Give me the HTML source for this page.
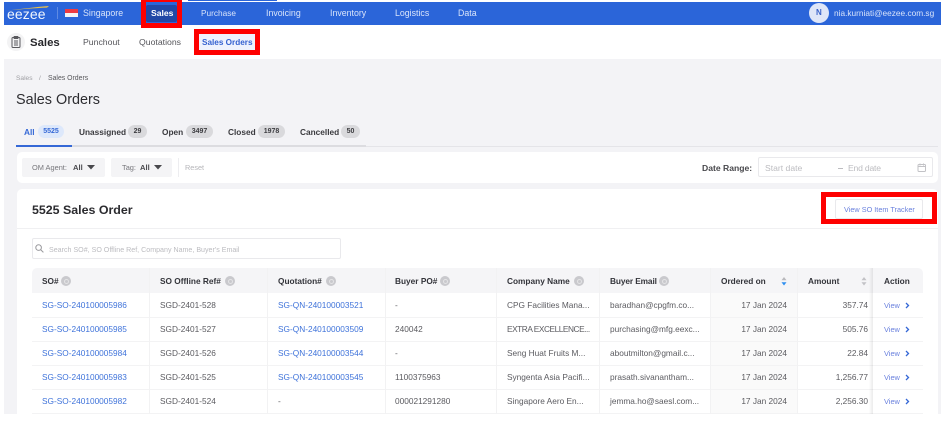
<!DOCTYPE html>
<html lang="en">
<head>
<meta charset="utf-8">
<title>Sales Orders</title>
<style>
html,body{margin:0;padding:0;background:#fff}
body{position:relative;width:941px;height:427px;overflow:hidden;font-family:"Liberation Sans",Arial,sans-serif;color:#3a3a3e}
#p{position:absolute;left:0;top:0;width:941px;height:427px;filter:blur(.3px)}
.b{position:absolute;box-sizing:border-box}
.t{position:absolute;line-height:12px;height:12px;white-space:nowrap;font-size:8.3px}
.h{font-weight:bold;color:#33343a}
.l{color:#3f73da}
.g{color:#5b5b60}
.nav{color:#d9e4fa;font-size:8.8px}
.sub{color:#55555a;font-size:8.7px}
.tab{font-size:8.3px;font-weight:bold;color:#3a3a3e}
.bd{position:absolute;top:125px;height:13px;border-radius:7px;background:#d9d9dc;color:#3c3c40;font-size:7px;font-weight:bold;line-height:13px;text-align:center}
.ic{position:absolute;top:276px;width:10px;height:10px;border-radius:50%;background:#c9c9cd}
.ic:after{content:"";position:absolute;left:3px;top:3px;width:3px;height:3px;border:1px solid #e4e4e6;border-radius:50%}
.rl{position:absolute;left:32px;width:891px;height:1px;background:#f3f3f4}
.cl{position:absolute;top:268px;width:1px;height:146px;background:#f2f2f3}
.r{position:absolute;box-sizing:border-box;border:5px solid #fe0000}
</style>
</head>
<body>
<div id="p">
  <!-- page backgrounds -->
  <div class="b" style="left:4px;top:59px;width:937px;height:355px;background:#f3f3f6"></div>
  <div class="b" style="left:188px;top:0;width:89px;height:1px;background:#2b65d9"></div>

  <!-- top nav -->
  <div class="b" style="left:4px;top:2px;width:937px;height:23px;background:#2b65d9"></div>
  <svg class="b" style="left:7px;top:5px" width="44" height="6" viewBox="0 0 44 6"><path d="M1 5.5C14 4 28 2 42 1L40 2.6C28 3 14 4.2 1 5.5Z" fill="#e9c24b"/></svg>
  <div class="t" style="left:7px;top:8px;color:#f2f6fd;font-size:14px;letter-spacing:.1px;line-height:12px">eezee</div>
  <div class="b" style="left:57px;top:7px;width:1px;height:12px;background:#5f8ae3"></div>
  <div class="b" style="left:65px;top:9px;width:13px;height:4px;background:#ee3a43"></div>
  <div class="b" style="left:65px;top:13px;width:13px;height:4px;background:#f4f4f6"></div>
  <div class="t nav" style="left:83px;top:7px">Singapore</div>
  <div class="b" style="left:146px;top:5px;width:31px;height:17px;background:#2148a6;border-radius:2px"></div>
  <div class="t" style="left:151px;top:7px;color:#fff;font-weight:bold;font-size:8.6px">Sales</div>
  <div class="t nav" style="left:201px;top:7px;font-size:8.3px">Purchase</div>
  <div class="t nav" style="left:266px;top:7px">Invoicing</div>
  <div class="t nav" style="left:330px;top:7px">Inventory</div>
  <div class="t nav" style="left:395px;top:7px">Logistics</div>
  <div class="t nav" style="left:458px;top:7px">Data</div>
  <div class="b" style="left:809px;top:3px;width:20px;height:20px;border-radius:50%;background:#dfe6f8"></div>
  <div class="t" style="left:816px;top:7px;color:#3a62c9;font-weight:bold;font-size:8px">N</div>
  <div class="t nav" style="left:834px;top:7px;font-size:8.3px">nia.kurniati@eezee.com.sg</div>

  <!-- sub nav -->
  <div class="b" style="left:7px;top:33px;width:18px;height:18px;border-radius:50%;background:#f3f3f4"></div>
  <svg class="b" style="left:11px;top:36px" width="10" height="12" viewBox="0 0 10 12" fill="none" stroke="#5a5a5e" stroke-width="1"><rect x="1" y="1.5" width="8" height="10" rx="1"/><rect x="3.2" y=".5" width="3.6" height="2" fill="#5a5a5e"/><path d="M3 5h4M3 7h4M3 9h4"/></svg>
  <div class="t" style="left:30px;top:37px;font-size:11.4px;font-weight:bold;color:#26262a">Sales</div>
  <div class="t sub" style="left:83px;top:36px">Punchout</div>
  <div class="t sub" style="left:139px;top:36px">Quotations</div>
  <div class="b" style="left:199px;top:33px;width:56px;height:17px;background:#eef2fd"></div>
  <div class="t" style="left:202px;top:37px;font-size:8.2px;font-weight:bold;color:#3461d0">Sales Orders</div>

  <!-- heading -->
  <div class="t" style="left:16px;top:73px;font-size:6.6px;color:#a0a0a5">Sales</div>
  <div class="t" style="left:39px;top:73px;font-size:6.6px;color:#a0a0a5">/</div>
  <div class="t" style="left:48px;top:73px;font-size:6.9px;color:#58585c">Sales Orders</div>
  <div class="t" style="left:16px;top:93px;font-size:14.4px;line-height:14px;height:14px;color:#2d2d31">Sales Orders</div>

  <!-- tabs -->
  <div class="t tab" style="left:24px;top:126px;color:#3568d6">All</div>
  <div class="bd" style="left:38px;width:26px;background:#dde8fb;color:#3568d6">5525</div>
  <div class="t tab" style="left:79px;top:126px">Unassigned</div>
  <div class="bd" style="left:128px;width:19px">29</div>
  <div class="t tab" style="left:162px;top:126px">Open</div>
  <div class="bd" style="left:186px;width:27px">3497</div>
  <div class="t tab" style="left:228px;top:126px">Closed</div>
  <div class="bd" style="left:258px;width:27px">1978</div>
  <div class="t tab" style="left:300px;top:126px">Cancelled</div>
  <div class="bd" style="left:341px;width:19px">50</div>
  <div class="b" style="left:366px;top:146px;width:572px;height:1px;background:#e4e4e8"></div>
  <div class="b" style="left:16px;top:145px;width:350px;height:2px;background:#dcdce0"></div>
  <div class="b" style="left:16px;top:145px;width:56px;height:2px;background:#3568d6"></div>

  <!-- filter bar -->
  <div class="b" style="left:17px;top:152px;width:921px;height:31px;background:#fff;border-radius:5px"></div>
  <div class="b" style="left:22px;top:158px;width:83px;height:19px;background:#f4f4f6;border-radius:2px"></div>
  <div class="t" style="left:32px;top:162px;font-size:7.4px;color:#77777c">OM Agent:</div>
  <div class="t" style="left:73px;top:162px;font-size:7.6px;font-weight:bold;color:#48484c">All</div>
  <svg class="b" style="left:87px;top:165px" width="8" height="5"><path d="M0 0H8L4 4.5Z" fill="#48484c"/></svg>
  <div class="b" style="left:111px;top:158px;width:61px;height:19px;background:#f4f4f6;border-radius:2px"></div>
  <div class="t" style="left:122px;top:162px;font-size:7.4px;color:#77777c">Tag:</div>
  <div class="t" style="left:140px;top:162px;font-size:7.6px;font-weight:bold;color:#48484c">All</div>
  <svg class="b" style="left:154px;top:165px" width="8" height="5"><path d="M0 0H8L4 4.5Z" fill="#48484c"/></svg>
  <div class="b" style="left:178px;top:158px;width:1px;height:19px;background:#ededf0"></div>
  <div class="t" style="left:185px;top:162px;font-size:7.3px;color:#b5b5b9">Reset</div>
  <div class="t" style="left:702px;top:162px;font-size:8.6px;font-weight:bold;color:#48484c">Date Range:</div>
  <div class="b" style="left:758px;top:157px;width:175px;height:20px;border:1px solid #e9e9ec;border-radius:2px;background:#fff"></div>
  <div class="t" style="left:765px;top:162px;font-size:8.6px;color:#bcbcc0">Start date</div>
  <div class="b" style="left:838px;top:168px;width:5px;height:1px;background:#bcbcc0"></div>
  <div class="t" style="left:848px;top:162px;font-size:8.6px;letter-spacing:-.2px;color:#bcbcc0">End date</div>
  <svg class="b" style="left:917px;top:163px" width="10" height="9" fill="none" stroke="#c2c2c6" stroke-width="1"><rect x="1" y="1.5" width="7.5" height="7" rx="1"/><path d="M1 3.5h7.5M3 .5v2M6.5 .5v2"/></svg>

  <!-- main card -->
  <div class="b" style="left:17px;top:189px;width:921px;height:225px;background:#fff;border-radius:5px 5px 0 0"></div>
  <div class="t" style="left:32px;top:204px;font-size:12.4px;font-weight:bold;color:#2b2b2f">5525 Sales Order</div>
  <div class="b" style="left:17px;top:228px;width:921px;height:1px;background:#f0f0f2"></div>
  <div class="b" style="left:835px;top:199px;width:88px;height:20px;border:1px solid #e9e9ec;border-radius:2px;background:#fff"></div>
  <div class="t" style="left:844px;top:204px;font-size:7.3px;color:#6b82de">View SO Item Tracker</div>

  <!-- search -->
  <div class="b" style="left:32px;top:238px;width:309px;height:21px;border:1px solid #e9e9ec;border-radius:2px;background:#fff"></div>
  <svg class="b" style="left:35px;top:244px" width="9" height="9" fill="none" stroke="#9a9a9e" stroke-width="1"><circle cx="3.6" cy="3.6" r="2.8"/><path d="M5.6 5.6L8.4 8.4"/></svg>
  <div class="t" style="left:49px;top:244px;font-size:7.1px;color:#bcbcc0">Search SO#, SO Offline Ref, Company Name, Buyer's Email</div>

  <!-- table -->
  <div class="b" style="left:32px;top:268px;width:891px;height:25px;background:#f5f5f7;border-radius:5px 5px 0 0"></div>
  <div class="b" style="left:711px;top:293px;width:86px;height:121px;background:#fafafa"></div>
  <div class="rl" style="top:317px"></div><div class="rl" style="top:341px"></div><div class="rl" style="top:365px"></div><div class="rl" style="top:389px"></div><div class="rl" style="top:413px"></div>
  <div class="cl" style="left:149px"></div><div class="cl" style="left:267px"></div><div class="cl" style="left:385px"></div><div class="cl" style="left:496px"></div><div class="cl" style="left:599px"></div><div class="cl" style="left:710px"></div><div class="cl" style="left:797px"></div>
  <div class="b" style="left:869px;top:268px;width:4px;height:146px;background:linear-gradient(90deg,rgba(0,0,0,0),rgba(0,0,0,.08))"></div>

  <div class="t h" style="left:42px;top:275px">SO#</div><div class="ic" style="left:61px"></div>
  <div class="t h" style="left:160px;top:275px">SO Offline Ref#</div><div class="ic" style="left:225px"></div>
  <div class="t h" style="left:278px;top:275px">Quotation#</div><div class="ic" style="left:326px"></div>
  <div class="t h" style="left:395px;top:275px">Buyer PO#</div><div class="ic" style="left:440px"></div>
  <div class="t h" style="left:507px;top:275px">Company Name</div><div class="ic" style="left:574px"></div>
  <div class="t h" style="left:610px;top:275px;letter-spacing:-.1px">Buyer Email</div><div class="ic" style="left:659px"></div>
  <div class="t h" style="left:721px;top:275px">Ordered on</div>
  <svg class="b" style="left:781px;top:277px" width="6" height="9"><path d="M3 0L5.5 3.2H.5Z" fill="#b9b9bd"/><path d="M3 8.5L5.5 5.3H.5Z" fill="#2f8ff0"/></svg>
  <div class="t h" style="left:808px;top:275px">Amount</div>
  <svg class="b" style="left:861px;top:277px" width="6" height="9"><path d="M3 0L5.5 3.2H.5Z" fill="#c2c2c6"/><path d="M3 8.5L5.5 5.3H.5Z" fill="#c2c2c6"/></svg>
  <div class="t h" style="left:884px;top:275px">Action</div>

  <!-- row 1 -->
  <div class="t l" style="left:42px;top:299px">SG-SO-240100005986</div>
  <div class="t g" style="left:160px;top:299px">SGD-2401-528</div>
  <div class="t l" style="left:278px;top:299px">SG-QN-240100003521</div>
  <div class="t g" style="left:395px;top:299px">-</div>
  <div class="t g" style="left:507px;top:299px">CPG Facilities Mana...</div>
  <div class="t g" style="left:610px;top:299px">baradhan@cpgfm.co...</div>
  <div class="t g" style="right:154px;top:299px">17 Jan 2024</div>
  <div class="t g" style="right:73px;top:299px">357.74</div>
  <div class="t" style="left:884px;top:300px;font-size:7.4px;color:#6b82de">View</div>
  <svg class="b" style="left:905px;top:302px" width="5" height="7" fill="none" stroke="#3568d6" stroke-width="1.3"><path d="M1 1l2.5 2.5L1 6"/></svg>

  <!-- row 2 -->
  <div class="t l" style="left:42px;top:323px">SG-SO-240100005985</div>
  <div class="t g" style="left:160px;top:323px">SGD-2401-527</div>
  <div class="t l" style="left:278px;top:323px">SG-QN-240100003509</div>
  <div class="t g" style="left:395px;top:323px">240042</div>
  <div class="t g" style="left:507px;top:323px;letter-spacing:-.45px">EXTRA EXCELLENCE...</div>
  <div class="t g" style="left:610px;top:323px">purchasing@mfg.eexc...</div>
  <div class="t g" style="right:154px;top:323px">17 Jan 2024</div>
  <div class="t g" style="right:73px;top:323px">505.76</div>
  <div class="t" style="left:884px;top:324px;font-size:7.4px;color:#6b82de">View</div>
  <svg class="b" style="left:905px;top:326px" width="5" height="7" fill="none" stroke="#3568d6" stroke-width="1.3"><path d="M1 1l2.5 2.5L1 6"/></svg>

  <!-- row 3 -->
  <div class="t l" style="left:42px;top:347px">SG-SO-240100005984</div>
  <div class="t g" style="left:160px;top:347px">SGD-2401-526</div>
  <div class="t l" style="left:278px;top:347px">SG-QN-240100003544</div>
  <div class="t g" style="left:395px;top:347px">-</div>
  <div class="t g" style="left:507px;top:347px">Seng Huat Fruits M...</div>
  <div class="t g" style="left:610px;top:347px">aboutmilton@gmail.c...</div>
  <div class="t g" style="right:154px;top:347px">17 Jan 2024</div>
  <div class="t g" style="right:73px;top:347px">22.84</div>
  <div class="t" style="left:884px;top:348px;font-size:7.4px;color:#6b82de">View</div>
  <svg class="b" style="left:905px;top:350px" width="5" height="7" fill="none" stroke="#3568d6" stroke-width="1.3"><path d="M1 1l2.5 2.5L1 6"/></svg>

  <!-- row 4 -->
  <div class="t l" style="left:42px;top:371px">SG-SO-240100005983</div>
  <div class="t g" style="left:160px;top:371px">SGD-2401-525</div>
  <div class="t l" style="left:278px;top:371px">SG-QN-240100003545</div>
  <div class="t g" style="left:395px;top:371px">1100375963</div>
  <div class="t g" style="left:507px;top:371px">Syngenta Asia Pacifi...</div>
  <div class="t g" style="left:610px;top:371px">prasath.sivanantham...</div>
  <div class="t g" style="right:154px;top:371px">17 Jan 2024</div>
  <div class="t g" style="right:73px;top:371px">1,256.77</div>
  <div class="t" style="left:884px;top:372px;font-size:7.4px;color:#6b82de">View</div>
  <svg class="b" style="left:905px;top:374px" width="5" height="7" fill="none" stroke="#3568d6" stroke-width="1.3"><path d="M1 1l2.5 2.5L1 6"/></svg>

  <!-- row 5 -->
  <div class="t l" style="left:42px;top:395px">SG-SO-240100005982</div>
  <div class="t g" style="left:160px;top:395px">SGD-2401-524</div>
  <div class="t g" style="left:278px;top:395px">-</div>
  <div class="t g" style="left:395px;top:395px">000021291280</div>
  <div class="t g" style="left:507px;top:395px">Singapore Aero En...</div>
  <div class="t g" style="left:610px;top:395px">jemma.ho@saesl.com...</div>
  <div class="t g" style="right:154px;top:395px">17 Jan 2024</div>
  <div class="t g" style="right:73px;top:395px">2,256.30</div>
  <div class="t" style="left:884px;top:396px;font-size:7.4px;color:#6b82de">View</div>
  <svg class="b" style="left:905px;top:398px" width="5" height="7" fill="none" stroke="#3568d6" stroke-width="1.3"><path d="M1 1l2.5 2.5L1 6"/></svg>
</div>

<!-- red annotation boxes -->
<div class="r" style="left:141px;top:-3px;width:41px;height:31px"></div>
<div class="r" style="left:194px;top:29px;width:66px;height:26px"></div>
<div class="r" style="left:821px;top:192px;width:116px;height:32px"></div>
</body>
</html>
